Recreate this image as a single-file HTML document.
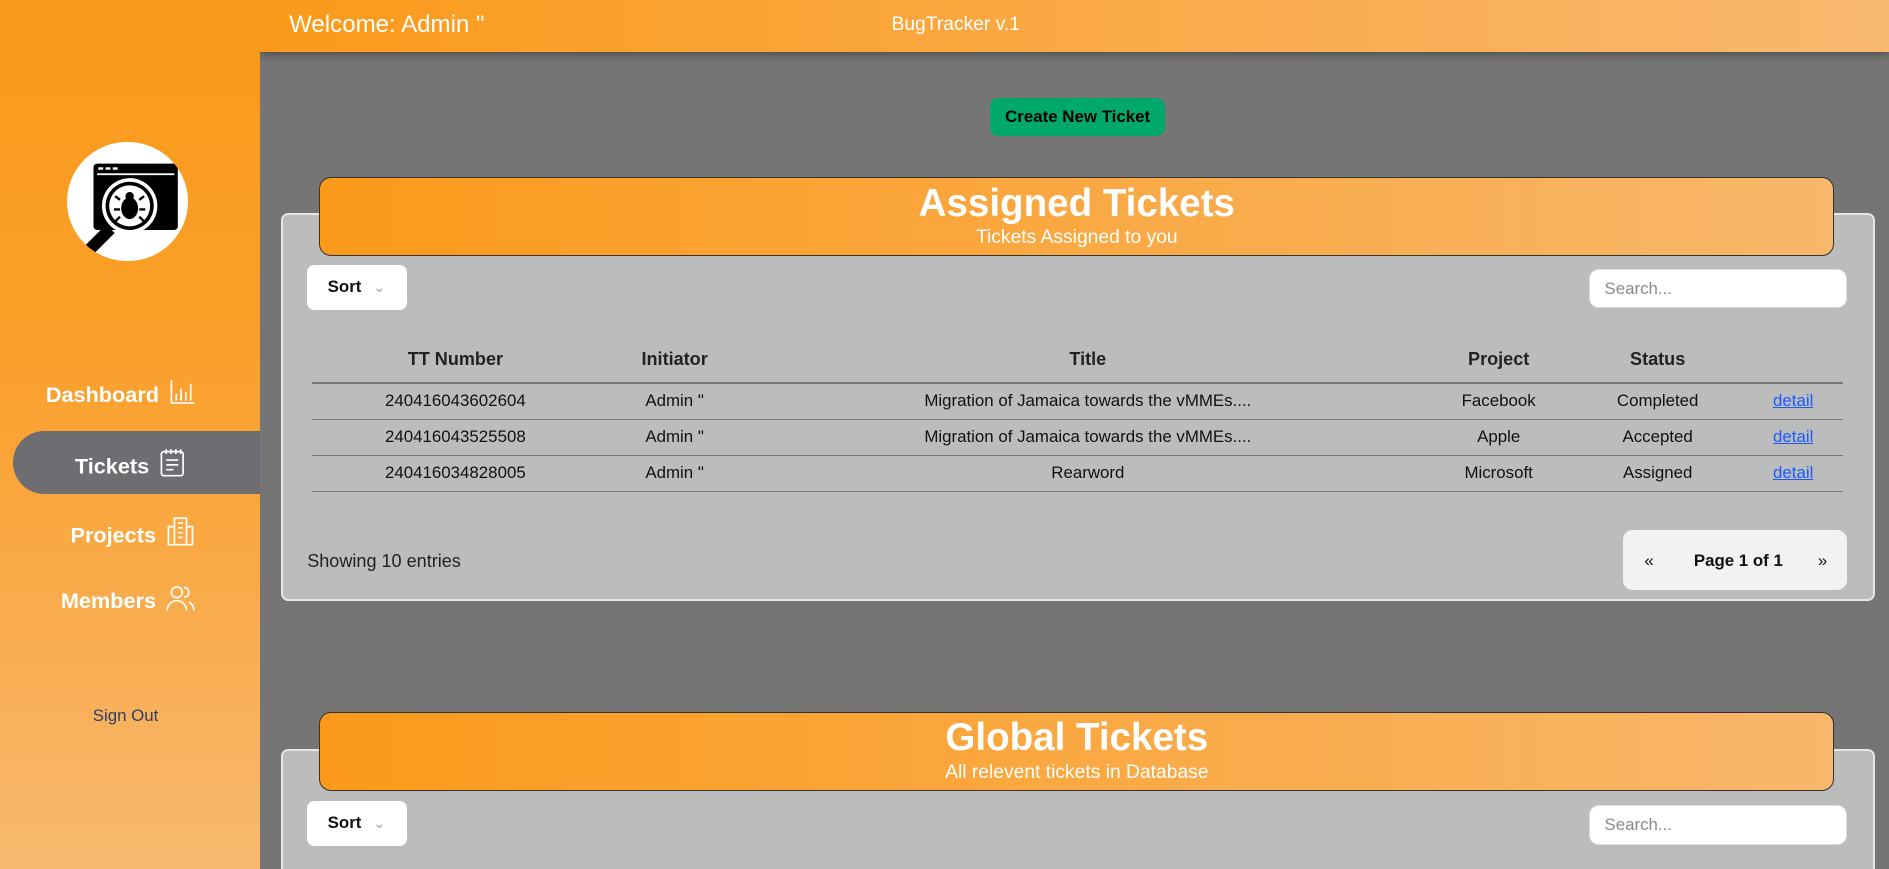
<!DOCTYPE html>
<html><head><meta charset="utf-8">
<style>
html,body{margin:0;padding:0;overflow:hidden}
body{width:1889px;height:868px;background:#757575;font-family:"Liberation Sans",sans-serif}
#w{position:absolute;left:0;top:0;width:1568px;height:721px;zoom:1.20472;overflow:hidden}
.sb{position:absolute;left:0;top:0;width:216px;height:721px;background:linear-gradient(180deg,#fb9a1a 0%,#fa9f2a 40%,#f8b96f 100%);z-index:2}
.hd{position:absolute;left:216px;top:0;width:1352px;height:43px;background:linear-gradient(90deg,#fb9a1a,#f9b870);box-shadow:0 2px 6px rgba(0,0,0,.35);z-index:1;color:#fff}
.logo{position:absolute;left:56px;top:118px;width:100px;height:99px;border-radius:50%;background:#fff;overflow:hidden}
.nav{position:absolute;left:0;width:216px;text-align:center;color:#fff;font-size:18px;font-weight:bold}
.nav svg{vertical-align:-3px;margin-left:8px}
.act{position:absolute;left:11px;top:358px;width:205px;height:52px;background:#6e6d72;border-radius:26px 0 0 26px}
.btn{position:absolute;left:822px;top:81px;width:145px;height:32px;background:#00a86b;border-radius:7px;font-size:14px;font-weight:bold;text-align:center;line-height:32px;color:#000}
.card{position:absolute;left:233px;width:1323px;background:#bcbcbc;border:2px solid #e6e6e6;border-radius:6px;box-sizing:border-box}
.ban{position:absolute;left:265px;width:1256px;height:64px;border:1px solid #333;border-radius:10px;background:linear-gradient(90deg,#fb9a1a,#f8b76b);color:#fff;text-align:center}
.ban b{display:block;font-size:32px;margin-top:2px;line-height:38px}
.ban span{display:block;font-size:16px;line-height:20px}
.sort{position:absolute;left:255px;width:83px;height:37px;background:#fff;border-radius:6px;font-size:14px;font-weight:bold;line-height:37px;box-sizing:border-box;padding-left:17px;color:#111}
.srch{position:absolute;left:1319px;width:214px;height:33px;background:#fff;border-radius:8px;border:1px solid #ddd;box-sizing:border-box;font-size:14px;color:#8a8a8a;line-height:31px;padding-left:12px}
table{position:absolute;left:259px;top:280px;width:1271px;border-collapse:collapse;font-size:14px;color:#111}
th{font-size:15px;height:37px;padding:0;border-bottom:2px solid #777;font-weight:bold;color:#222}
td{height:29px;padding:0;line-height:29px;border-bottom:1px solid #777;text-align:center}
a{color:#1a5cff}
.pg{position:absolute;left:1347px;top:440px;width:186px;height:50px;background:#f2f2f2;border-radius:8px;font-size:14px;color:#111}
</style></head><body><div id="w">
<div class="hd"><span style="position:absolute;left:24px;top:9px;font-size:20px">Welcome: Admin "</span><span style="position:absolute;left:524px;top:12px;font-size:16px">BugTracker v.1</span></div>
<div class="sb">
<div class="logo"><svg width="100" height="99" viewBox="0 0 100 99">
<rect x="22" y="18" width="70" height="55" rx="3" fill="#000"/><rect x="25" y="26" width="64" height="1.5" fill="#fff"/>
<rect x="26" y="21" width="4" height="2" fill="#fff"/><rect x="32" y="21" width="4" height="2" fill="#fff"/><rect x="38" y="21" width="4" height="2" fill="#fff"/>
<circle cx="52" cy="53" r="23" fill="#fff"/><circle cx="52" cy="53" r="20" fill="#000"/><circle cx="52" cy="53" r="17" fill="#fff"/>
<ellipse cx="52" cy="55" rx="7" ry="9" fill="#000"/><circle cx="52" cy="45" r="3.5" fill="#000"/>
<path d="M44 48l-4-3M60 48l4-3M44 56h-5M60 56h5M44 62l-4 4M60 62l4 4" stroke="#000" stroke-width="2"/>
<path d="M36 72L16 92" stroke="#000" stroke-width="10"/></svg></div>
<div class="act"></div>
<div class="nav" style="top:315px;left:-8px">Dashboard<svg width="22" height="22" viewBox="0 0 22 22" fill="none" stroke="#fff" stroke-width="1.4"><path d="M2 1v19h19M6 12v6M10 8v10M14 11v7M18 4v14"/></svg></div>
<div class="nav" style="top:372px;left:0">Tickets<svg width="22" height="24" viewBox="0 0 22 24" fill="none" stroke="#fff" stroke-width="1.4"><rect x="2" y="3" width="18" height="20" rx="2"/><path d="M6 1v4M10 1v4M14 1v4M18 1v4M6 10h10M6 14h10M6 18h6"/></svg></div>
<div class="nav" style="top:429px;left:2px">Projects<svg width="24" height="24" viewBox="0 0 24 24" fill="none" stroke="#fff" stroke-width="1.4"><rect x="7" y="1" width="10" height="22"/><path d="M7 8H2v15h5M17 8h5v15h-5M10 5h4M10 9h4M10 13h4M10 17h4"/></svg></div>
<div class="nav" style="top:486px;left:-2px">Members<svg width="24" height="22" viewBox="0 0 24 22" fill="none" stroke="#fff" stroke-width="1.4"><circle cx="9" cy="6" r="4.5"/><path d="M1 21c0-5 4-8 8-8s8 3 8 8M15 2a4 4 0 010 8M19 14c2 1 4 3 4 7"/></svg></div>
<div style="position:absolute;left:77px;top:586px;font-size:14px;color:#2a3f6e">Sign Out</div>
</div>
<div class="btn">Create New Ticket</div>

<div class="card" style="top:177px;height:322px"></div>
<div class="ban" style="top:147px"><b>Assigned Tickets</b><span>Tickets Assigned to you</span></div>
<div class="sort" style="top:220px">Sort <span style="color:#aaa;font-weight:normal;margin-left:6px;font-size:12px">&#8964;</span></div>
<div class="srch" style="top:223px">Search...</div>
<table>
<tr><th style="width:238px">TT Number</th><th style="width:126px">Initiator</th><th style="width:560px">Title</th><th style="width:122px">Project</th><th style="width:142px">Status</th><th></th></tr>
<tr><td>240416043602604</td><td>Admin "</td><td>Migration of Jamaica towards the vMMEs....</td><td>Facebook</td><td>Completed</td><td><a href="#">detail</a></td></tr>
<tr><td>240416043525508</td><td>Admin "</td><td>Migration of Jamaica towards the vMMEs....</td><td>Apple</td><td>Accepted</td><td><a href="#">detail</a></td></tr>
<tr><td>240416034828005</td><td>Admin "</td><td>Rearword</td><td>Microsoft</td><td>Assigned</td><td><a href="#">detail</a></td></tr>
</table>
<div style="position:absolute;left:255px;top:457px;font-size:15px;color:#222">Showing 10 entries</div>
<div class="pg"><span style="position:absolute;left:18px;top:17px">«</span><span style="position:absolute;left:59px;top:17px;font-weight:bold">Page 1 of 1</span><span style="position:absolute;left:162px;top:17px">»</span></div>

<div class="card" style="top:622px;height:99px;border-bottom:none;border-radius:6px 6px 0 0"></div>
<div class="ban" style="top:591px"><b>Global Tickets</b><span>All relevent tickets in Database</span></div>
<div class="sort" style="top:665px">Sort <span style="color:#aaa;font-weight:normal;margin-left:6px;font-size:12px">&#8964;</span></div>
<div class="srch" style="top:668px">Search...</div>
</div></body></html>
